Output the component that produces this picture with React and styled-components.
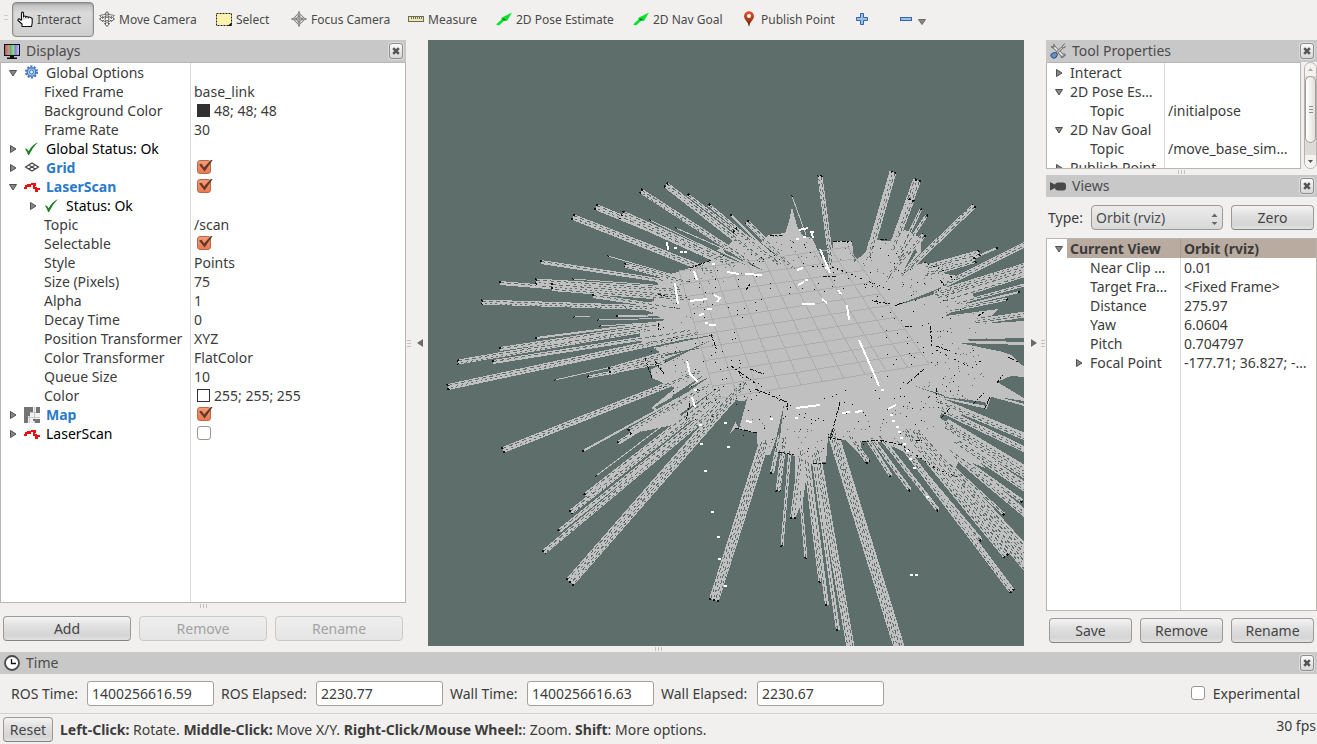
import React from "react";
import styled, { createGlobalStyle, css } from "styled-components";

const GlobalStyle = createGlobalStyle`
  *, *::before, *::after { box-sizing: border-box; }
  body {
    margin: 0;
    background: #f1f0ee;
    color: #3c3c3c;
    font-family: "Noto Sans", "Open Sans", sans-serif;
    font-size: 14px;
    line-height: 19px;
  }
  button, input, select { font: inherit; color: inherit; }
`;

const Window = styled.div`
  min-height: 100vh;
  display: flex;
  flex-direction: column;
`;

/* ---------- toolbar ---------- */

const Toolbar = styled.header`
  display: flex;
  align-items: center;
  height: 40px;
  padding: 0 0 2px 4px;
`;

const ToolbarGrip = styled.span`
  width: 4px;
  height: 8px;
  margin-right: 4px;
  background: repeating-linear-gradient(#cfcdca 0 1px, transparent 1px 4px);
`;

const ToolButton = styled.button`
  display: flex;
  align-items: center;
  gap: 4px;
  width: ${(p) => p.$width}px;
  height: 35px;
  padding: 0 4px;
  border: 1px solid transparent;
  border-radius: 4px;
  background: none;
  font-size: 12px;
  color: #4a4a4a;
  white-space: nowrap;
  svg { flex: none; }
  ${(p) =>
    p.$active &&
    css`
      border-color: #8b8b8b;
      background: linear-gradient(#bdbdbd, #dadada 30%, #cfcfcf);
      box-shadow: inset 0 1px 2px #999;
    `}
`;

/* ---------- docks ---------- */

const Main = styled.main`
  flex: 1;
  display: flex;
`;

const Dock = styled.section`
  flex: none;
  display: flex;
  flex-direction: column;
  width: ${(p) => p.$width}px;
`;

const DockTitle = styled.h2`
  flex: none;
  display: flex;
  align-items: center;
  gap: 6px;
  height: 22px;
  margin: 0;
  padding: 0 3px 0 4px;
  background: #c8c8c8;
  color: #4c4c4c;
  font-size: 14px;
  font-weight: 400;
  svg { flex: none; }
`;

const TitleText = styled.span`
  padding-bottom: 2px;
`;

const CloseButton = styled.button`
  display: flex;
  align-items: center;
  justify-content: center;
  width: 14px;
  height: 16px;
  margin-left: auto;
  padding: 0;
  border: 1px solid #8e8e8e;
  border-radius: 3px;
  background: linear-gradient(#fafafa, #d8d8d8);
  box-shadow: 0 0 0 1px #dcdcdc;
`;

const TreeFrame = styled.div`
  flex: ${(p) => (p.$height ? "none" : "1")};
  height: ${(p) => (p.$height ? `${p.$height}px` : "auto")};
  min-width: 0;
  overflow: hidden;
  border: 1px solid #bab5b0;
  background: linear-gradient(#d9d9d9, #d9d9d9) ${(p) => p.$split}px 0 / 1px 100% no-repeat #fff;
`;

const Tree = styled.table`
  width: 100%;
  table-layout: fixed;
  border-collapse: separate;
  border-spacing: 0;
`;

const NameCell = styled.td`
  width: ${(p) => p.$width}px;
  height: 19px;
  padding: 0;
`;

const ValueCell = styled.td`
  height: 19px;
  padding: 0 0 0 3px;
  border-left: 1px solid #d9d9d9;
  white-space: nowrap;
  ${(p) =>
    p.$selected &&
    css`
      background: #b9aba0;
      border-color: #a99c92;
      font-weight: 700;
    `}
`;

const NameLine = styled.div`
  display: flex;
  align-items: center;
  height: 19px;
  padding-left: ${(p) => p.$indent}px;
  white-space: nowrap;
`;

const Twisty = styled.span`
  flex: none;
  display: flex;
  width: 12px;
`;

const RowIcon = styled.span`
  flex: none;
  display: flex;
  width: 16px;
  margin-left: 3px;
`;

const Name = styled.span`
  flex: 1;
  padding-left: ${(p) => p.$gap}px;
  color: ${(p) => (p.$tone === "link" ? "#2a7ac8" : p.$tone === "black" ? "#000" : "#3c3c3c")};
  font-weight: ${(p) => (p.$tone === "link" || p.$selected ? 700 : 400)};
  background: ${(p) => (p.$selected ? "#b9aba0" : "none")};
`;

const ValueLine = styled.div`
  display: flex;
  align-items: center;
  gap: 4px;
  height: 19px;
`;

const Swatch = styled.span`
  width: 13px;
  height: 13px;
  margin-left: 3px;
  border: 1px solid #303030;
  background: ${(p) => p.$color};
`;

const Checkbox = styled.input`
  appearance: none;
  flex: none;
  position: relative;
  width: 14px;
  height: 14px;
  margin: 0;
  border: 1px solid #9a9590;
  border-radius: 3px;
  background: #fff;
  &:checked {
    border-color: #b4684c;
    background: linear-gradient(#f59a76, #ec7a52);
  }
  &:checked::after {
    content: "";
    position: absolute;
    left: 1px;
    top: -1px;
    width: 14px;
    height: 12px;
    background: #623a2c;
    clip-path: polygon(0 42%, 18% 36%, 36% 66%, 88% 0, 100% 0, 40% 100%);
  }
`;

const TreeCheckbox = styled(Checkbox)`
  margin: 0 0 2px 3px;
`;

const ScrollArea = styled.div`
  display: flex;
  gap: 3px;
`;

const ScrollTree = styled(TreeFrame)`
  flex: 1;
`;

const ScrollBar = styled.div`
  display: flex;
  flex-direction: column;
  width: 13px;
  height: 107px;
  border: 1px solid #b5b2af;
  border-radius: 7px;
  background: #dddbd8;
  overflow: hidden;
`;

const ScrollArrow = styled.button`
  display: flex;
  align-items: center;
  justify-content: center;
  height: 13px;
  padding: 0;
  border: 0;
  background: #f4f3f2;
`;

const ScrollThumb = styled.div`
  display: flex;
  align-items: center;
  justify-content: center;
  height: 67px;
  margin-bottom: 12px;
  border: 1px solid #a09c98;
  border-radius: 6px;
  background: linear-gradient(90deg, #fff, #e2e1df);
  &::after {
    content: "";
    width: 4px;
    height: 7px;
    background: repeating-linear-gradient(#8f8f8f 0 1px, transparent 1px 3px);
  }
`;

const ButtonRow = styled.div`
  display: flex;
  gap: 8px;
  padding: ${(p) => p.$pad};
`;

const PushButton = styled.button`
  flex: ${(p) => (p.$width ? "none" : "1")};
  width: ${(p) => (p.$width ? `${p.$width}px` : "auto")};
  min-width: 0;
  height: 25px;
  padding: 0 4px;
  border: 1px solid #9c9a98;
  border-bottom-color: #858381;
  border-radius: 4px;
  background: linear-gradient(#f4f4f4, #e0e0e0 40%, #d5d5d5 80%, #e2e2e2);
  color: #454545;
  line-height: 19px;
  &:disabled {
    border-color: #cbc9c7;
    background: linear-gradient(#eeeeee, #e5e5e5);
    color: #a2a2a2;
  }
`;

const TypeRow = styled.div`
  display: flex;
  align-items: center;
  gap: 8px;
  height: 41px;
  padding: 0 3px 0 2px;
  label { width: 35px; white-space: nowrap; }
`;

const SelectBox = styled.div`
  flex: 1;
  position: relative;
  svg { position: absolute; right: 5px; top: 8px; pointer-events: none; }
`;

const Select = styled.select`
  appearance: none;
  display: block;
  width: 100%;
  height: 25px;
  padding: 0 20px 0 4px;
  border: 1px solid #9c9a98;
  border-radius: 4px;
  background: linear-gradient(#ececec, #d8d8d8);
  color: #4c4c4c;
`;

const HandleRow = styled.div`
  flex: none;
  display: flex;
  align-items: center;
  justify-content: center;
  height: ${(p) => p.$height}px;
  &::after {
    content: "";
    width: 7px;
    height: 4px;
    background: repeating-linear-gradient(90deg, #c4c2bf 0 1px, transparent 1px 3px);
  }
`;

const SideHandle = styled.div`
  flex: none;
  display: flex;
  align-items: center;
  justify-content: space-between;
  width: 22px;
  padding: ${(p) => (p.$flip ? "0 1px 0 7px" : "0 5px 0 1px")};
`;

const SideDots = styled.span`
  width: 4px;
  height: 7px;
  background: repeating-linear-gradient(#c4c2bf 0 1px, transparent 1px 3px);
`;

const Viewport = styled.div`
  flex: 1;
  min-width: 0;
  display: flex;
  background: ${"#5e6e6b"};
  overflow: hidden;
  svg { flex: 1; width: 100%; min-height: 606px; }
`;

/* ---------- bottom ---------- */

const TimeRow = styled.div`
  display: flex;
  align-items: center;
  gap: 8px;
  height: 40px;
  padding: 0 17px 1px 11px;
  border-bottom: 1px solid #d4d2cf;
`;

const TimeLabel = styled.label`
  width: ${(p) => p.$width}px;
  white-space: nowrap;
`;

const TimeField = styled.input`
  width: 127px;
  height: 25px;
  margin-right: -1px;
  padding: 0 4px;
  border: 1px solid #a5a09b;
  border-radius: 3px;
  background: #fff;
`;

const Experimental = styled.label`
  display: flex;
  align-items: center;
  gap: 8px;
  margin-left: auto;
`;

const StatusBar = styled.footer`
  display: flex;
  align-items: center;
  gap: 7px;
  height: 30px;
  padding: 0 1px 0 3px;
  white-space: nowrap;
`;

const Fps = styled.span`
  align-self: flex-start;
  margin-left: auto;
  padding-top: 2px;
`;

/* ---------- icons ---------- */

const Svg = ({ w = 16, h = 16, children, ...rest }) => (
  <svg width={w} height={h} viewBox={`0 0 ${w} ${h}`} fill="none" aria-hidden="true" {...rest}>
    {children}
  </svg>
);

const HandIcon = () => (
  <Svg>
    <path
      d="M4.5 9V1.8Q5.500 0.500 6.500 1.800V6.500M6.500 6.500V5.500Q7.500 4.500 8.800 5.500V7M8.800 7V5.800Q10 5 11.200 6V7.500M11.200 7.500V6.400Q12.500 5.600 13.500 6.500L15.200 7.500V12L14.500 15.500H5V13L1 9.500Q0.800 7.500 2.500 8L4.500 9.500"
      fill="#fff"
      stroke="#111"
      strokeWidth="1.1"
      strokeLinejoin="round"
    />
  </Svg>
);

const MoveIcon = () => (
  <Svg>
    <path
      d="M8 0.500L10.500 3.500H9V5.500Q11 6 12 7V5.500L15.500 8L12 10.500V9Q11 10.500 9 10.800V12.500H10.500L8 15.500L5.500 12.500H7V10.800Q5 10.500 4 9V10.500L0.500 8L4 5.500V7Q5 6 7 5.500V3.500H5.500Z"
      fill="#fff"
      stroke="#555"
      strokeLinejoin="round"
    />
    <path d="M0.500 4.500Q8 1.500 15.500 4.500M0.500 4.500L4 8M15.500 4.500L12 8" stroke="#777" />
    <circle cx="8" cy="8" r="2" stroke="#555" />
  </Svg>
);

const SelectIcon = () => (
  <Svg>
    <rect x="0.500" y="2.500" width="15" height="12" fill="#fbf3ac" stroke="#222" strokeDasharray="2 1" />
    <path d="M15.500 11.500V15H11.500Z" fill="#111" />
  </Svg>
);

const FocusIcon = () => (
  <Svg>
    <circle cx="8" cy="8" r="4.500" stroke="#777" />
    <circle cx="8" cy="8" r="2.500" stroke="#777" />
    <path d="M8 4V12M4 8H12" stroke="#777" />
    <path d="M8 0.500L9.300 4H6.700ZM8 15.500L9.300 12H6.700ZM0.500 8L4 6.700V9.300ZM15.500 8L12 6.700V9.300Z" fill="#fff" stroke="#777" />
  </Svg>
);

const RulerIcon = () => (
  <Svg>
    <rect x="0.500" y="5.500" width="15" height="5" fill="#efe6ad" stroke="#6e6a5d" />
    <path d="M3.500 6V8M5.500 6V8M7.500 6V8M9.500 6V8M11.500 6V8M13.500 6V8" stroke="#6e6a5d" />
  </Svg>
);

const ArrowIcon = () => (
  <Svg>
    <path d="M0 13.500L6 8L5 7L16 1.500L11 10L8.500 9.500L3 14.500Z" fill="#08e22c" />
    <path d="M6.500 8L9.500 9" stroke="#067d1a" strokeWidth="1.500" />
  </Svg>
);

const PinIcon = () => (
  <Svg>
    <defs>
      <linearGradient id="pin" x1="0" y1="0" x2="0" y2="1">
        <stop offset="0" stopColor="#e5532f" />
        <stop offset="0.550" stopColor="#a83a1c" />
        <stop offset="1" stopColor="#40200c" />
      </linearGradient>
    </defs>
    <path d="M8 15.800Q7.500 12 4.500 9Q3 7.500 3 5.300A5 5 0 0 1 13 5.300Q13 7.500 11.500 9Q8.500 12 8 15.800Z" fill="url(#pin)" />
    <circle cx="8" cy="5" r="2" fill="#fff" />
  </Svg>
);

const PlusIcon = () => (
  <Svg>
    <path d="M6.500 2.500H9.500V6.500H13.500V9.500H9.500V13.500H6.500V9.500H2.500V6.500H6.500Z" fill="#9cc0e8" stroke="#3465a4" />
  </Svg>
);

const MinusIcon = () => (
  <Svg>
    <rect x="2.500" y="6.500" width="11" height="3" fill="#9cc0e8" stroke="#3465a4" />
  </Svg>
);

const DropIcon = () => (
  <Svg w={8} h={12}>
    <path d="M0.500 6.500H7.500L4 11.500Z" fill="#8a8a8a" stroke="#6a6a6a" />
  </Svg>
);

const MonitorIcon = () => (
  <Svg>
    <defs>
      <linearGradient id="screen">
        <stop offset="0" stopColor="#a95b5b" />
        <stop offset="0.330" stopColor="#d79b98" />
        <stop offset="0.340" stopColor="#52a85c" />
        <stop offset="0.660" stopColor="#a9e0aa" />
        <stop offset="0.670" stopColor="#7a76cf" />
        <stop offset="1" stopColor="#c9c6f5" />
      </linearGradient>
    </defs>
    <rect x="0.500" y="1.500" width="15" height="11" fill="url(#screen)" stroke="#111" />
    <path d="M6 13H10V14.500H13V16H3V14.500H6Z" fill="#111" />
  </Svg>
);

const ToolsIcon = () => (
  <Svg>
    <path d="M3 3L12.500 12.500" stroke="#777" strokeWidth="3.200" />
    <path d="M3 3L12.500 12.500" stroke="#f4f4f4" strokeWidth="1.600" />
    <path d="M1 3.500L3 4.500L4.500 3L3.500 1M10.500 13.500L12 14.500L15 12L13.500 10.500" stroke="#777" strokeWidth="1.500" />
    <path d="M14 3L6.500 10" stroke="#777" strokeWidth="2.400" />
    <path d="M14 3L7 9.500" stroke="#e6e6e6" />
    <path d="M15 0.500L12.500 2.500V4.500H15L16 3" stroke="#777" />
    <path d="M1 13.500Q0 11 3 10L5.500 9.500L7.500 11.500L6 14.500Q3 16.500 1 13.500Z" fill="#6f8fc8" stroke="#26457f" />
  </Svg>
);

const CameraIcon = () => (
  <Svg>
    <path d="M0 4L6 7V9.500L0 12.500Z" fill="#484848" />
    <rect x="5" y="4.500" width="11" height="8" rx="3" fill="#484848" />
  </Svg>
);

const ClockIcon = () => (
  <Svg>
    <circle cx="8" cy="8" r="7" fill="#fff" stroke="#4a4a4a" strokeWidth="1.800" />
    <path d="M7.500 4V8.500H12" stroke="#111" strokeWidth="1.300" />
  </Svg>
);

const CrossIcon = () => (
  <Svg w={8} h={8}>
    <path d="M1.200 1.200L6.800 6.800M6.800 1.200L1.200 6.800" stroke="#555" strokeWidth="2.600" />
  </Svg>
);

const GearIcon = () => (
  <Svg>
    <circle cx="7.500" cy="7" r="5.500" stroke="#3f74b8" strokeWidth="2" strokeDasharray="2 1.450" />
    <circle cx="7.500" cy="7" r="4.300" fill="#a9c8ea" stroke="#4a80c0" strokeWidth="1.400" />
    <circle cx="7.500" cy="7" r="2" fill="#dceaf7" stroke="#3f74b8" />
  </Svg>
);

const TickIcon = () => (
  <Svg>
    <path d="M1 7.800Q3 6.800 4.500 10.200Q8 4 14 1Q8.500 6.500 5 14H4Q3 10.500 1 7.800Z" fill="#1d7d22" />
  </Svg>
);

const GridIcon = () => (
  <Svg>
    <path d="M1.500 7L8 3L14.500 7L8 11ZM4.700 5L11.300 9M11.300 5L4.700 9" stroke="#444" strokeWidth="1.200" />
  </Svg>
);

const ScanIcon = () => (
  <Svg shapeRendering="crispEdges">
    <path d="M0 9H2V7H4V6H6V7H5M7 5H11V7M10 6V9H12V12M11 12H13V10H16V9" stroke="#f00d0d" strokeWidth="1.600" />
  </Svg>
);

const MapIcon = () => (
  <Svg>
    <rect width="16" height="16" fill="#f1f1f1" />
    <path d="M5.500 0V16M10.500 0V16M0 5.500H16M0 10.500H16" stroke="#c9c9c9" />
    <path d="M0 0H9V5H6V9H4V16H0ZM12 0H16V6H12ZM9 12H16V16H11V14H9Z" fill="#747474" />
  </Svg>
);

const Triangle = ({ open }) => (
  <Svg w={8} h={8}>
    <path d={open ? "M0.500 1.500H7.500L4 7Z" : "M1.500 0.500V7.500L7 4Z"} fill="#888" stroke="#4f4f4f" />
  </Svg>
);

const rowIcons = { gear: GearIcon, tick: TickIcon, grid: GridIcon, scan: ScanIcon, map: MapIcon };

/* ---------- property trees ---------- */

const displayRows = [
  { name: "Global Options", icon: "gear", open: true },
  { name: "Fixed Frame", leaf: true, value: "base_link" },
  { name: "Background Color", leaf: true, value: "48; 48; 48", swatch: "#303030" },
  { name: "Frame Rate", leaf: true, value: "30" },
  { name: "Global Status: Ok", icon: "tick", tone: "black" },
  { name: "Grid", icon: "grid", tone: "link", checked: true },
  { name: "LaserScan", icon: "scan", tone: "link", open: true, checked: true },
  { name: "Status: Ok", icon: "tick", tone: "black", level: 1 },
  { name: "Topic", leaf: true, value: "/scan" },
  { name: "Selectable", leaf: true, checked: true },
  { name: "Style", leaf: true, value: "Points" },
  { name: "Size (Pixels)", leaf: true, value: "75" },
  { name: "Alpha", leaf: true, value: "1" },
  { name: "Decay Time", leaf: true, value: "0" },
  { name: "Position Transformer", leaf: true, value: "XYZ" },
  { name: "Color Transformer", leaf: true, value: "FlatColor" },
  { name: "Queue Size", leaf: true, value: "10" },
  { name: "Color", leaf: true, value: "255; 255; 255", swatch: "#fff" },
  { name: "Map", icon: "map", tone: "link", checked: true },
  { name: "LaserScan", icon: "scan", tone: "black", checked: false },
];

const toolRows = [
  { name: "Interact" },
  { name: "2D Pose Es…", open: true },
  { name: "Topic", leaf: true, value: "/initialpose" },
  { name: "2D Nav Goal", open: true },
  { name: "Topic", leaf: true, value: "/move_base_sim…" },
  { name: "Publish Point" },
];

const viewRows = [
  { name: "Current View", open: true, value: "Orbit (rviz)", selected: true },
  { name: "Near Clip …", leaf: true, value: "0.01" },
  { name: "Target Fra…", leaf: true, value: "<Fixed Frame>" },
  { name: "Distance", leaf: true, value: "275.97" },
  { name: "Yaw", leaf: true, value: "6.0604" },
  { name: "Pitch", leaf: true, value: "0.704797" },
  { name: "Focal Point", level: 1, value: "-177.71; 36.827; -…" },
];

function PropertyTree({ rows, split }) {
  return (
    <Tree>
      <tbody>
        {rows.map((row, i) => {
          const Icon = rowIcons[row.icon];
          return (
            <tr key={i}>
              <NameCell $width={split}>
                <NameLine $indent={row.leaf ? 43 : 8 + 20 * (row.level || 0)}>
                  {!row.leaf && (
                    <Twisty>
                      <Triangle open={row.open} />
                    </Twisty>
                  )}
                  {Icon && (
                    <RowIcon>
                      <Icon />
                    </RowIcon>
                  )}
                  <Name $tone={row.tone} $selected={row.selected} $gap={row.leaf ? 0 : Icon ? 6 : 3}>
                    {row.name}
                  </Name>
                </NameLine>
              </NameCell>
              <ValueCell $selected={row.selected}>
                <ValueLine>
                  {row.swatch && <Swatch $color={row.swatch} />}
                  {row.checked !== undefined && (
                    <TreeCheckbox type="checkbox" defaultChecked={row.checked} aria-label={row.name} />
                  )}
                  {row.value}
                </ValueLine>
              </ValueCell>
            </tr>
          );
        })}
      </tbody>
    </Tree>
  );
}

/* ---------- laser map ---------- */

const SKY = "#5e6e6b";
const FREE = "#c0c0c0";

/* outer tip x, y, inner end x, y, width */
const rays = [
  [666, 185, 765, 262, 6], [641, 191, 750, 262, 5], [596, 207, 720, 258, 6], [622, 215, 735, 266, 9],
  [573, 217, 712, 272, 6], [688, 195, 775, 262, 3], [709, 205, 770, 256, 3], [650, 220, 720, 254, 1],
  [676, 228, 740, 256, 1], [541, 262, 665, 281, 4], [608, 256, 680, 277, 1], [625, 265, 690, 283, 5],
  [500, 283, 680, 298, 4], [536, 282, 680, 291, 7], [552, 287, 690, 298, 8], [482, 302, 660, 308, 5],
  [593, 296, 680, 309, 4], [573, 279, 680, 287, 1], [617, 316, 680, 315, 2], [598, 320, 680, 318, 1],
  [458, 362, 650, 329, 5], [493, 362, 690, 331, 4], [536, 338, 660, 322, 2], [500, 349, 660, 325, 4],
  [574, 317, 590, 316, 1], [600, 326, 680, 321, 1], [448, 387, 700, 333, 6], [555, 380, 660, 356, 1],
  [588, 377, 665, 362, 3], [610, 371, 665, 355, 8], [503, 450, 700, 372, 6], [583, 451, 690, 392, 2],
  [596, 476, 690, 405, 1], [618, 443, 700, 392, 4], [630, 432, 710, 385, 7], [585, 495, 720, 390, 4],
  [571, 512, 720, 395, 5], [559, 531, 720, 402, 4], [544, 552, 720, 405, 5], [570, 582, 745, 382, 10],
  [714, 600, 765, 440, 10], [772, 473, 780, 435, 4], [778, 491, 785, 435, 5], [782, 546, 790, 450, 3],
  [793, 518, 802, 450, 6], [806, 558, 800, 490, 3], [820, 582, 805, 460, 3], [827, 605, 808, 460, 4],
  [838, 630, 813, 455, 4], [851, 650, 816, 450, 8], [900, 650, 832, 430, 11], [868, 462, 850, 436, 5],
  [891, 476, 868, 440, 4], [910, 490, 872, 438, 4], [938, 510, 880, 436, 4], [981, 540, 895, 438, 4],
  [1012, 591, 900, 442, 6], [1007, 555, 905, 430, 9], [1028, 568, 915, 430, 10], [1028, 553, 925, 440, 9],
  [1004, 514, 945, 460, 3], [1028, 516, 955, 455, 7], [1022, 501, 950, 450, 4], [1028, 489, 955, 440, 9],
  [1028, 474, 945, 424, 12], [1028, 451, 942, 410, 6], [1028, 438, 937, 400, 7], [1028, 406, 985, 394, 2],
  [820, 176, 832, 268, 5], [893, 172, 868, 258, 7], [917, 180, 892, 250, 8], [911, 200, 892, 250, 7],
  [921, 209, 900, 252, 3], [927, 215, 898, 258, 3], [924, 235, 890, 274, 5], [974, 206, 902, 275, 5],
  [792, 196, 806, 235, 1], [747, 222, 795, 270, 5], [731, 215, 785, 268, 2], [735, 230, 780, 265, 6],
  [997, 248, 930, 277, 2], [1028, 243, 940, 287, 5], [979, 253, 925, 268, 6], [975, 260, 925, 275, 6],
  [1028, 267, 935, 296, 10], [1028, 274, 940, 302, 4], [1028, 284, 955, 304, 3], [1019, 292, 945, 310, 2],
  [1007, 299, 950, 311, 3], [1028, 314, 975, 322, 6],
];

const hull =
  "690,268 712,260 708,254 728,245 740,233 752,238 760,243 768,235 785,233 789,222 792,207 797,226 803,236 812,238 820,255 831,268 833,241 852,241 854,262 866,252 869,240 892,241 905,230 921,238 921,252 904,271 924,262 941,270 946,274 958,276 951,283 935,290 895,306 945,291 970,290 975,298 945,316 1000,307 992,316 977,318 978,324 1024,321 1024,338 950,340 1024,342 1024,345 960,343 1003,352 1011,355 1019,363 1024,366 1024,377 1011,376 997,382 1024,398 1024,401 991,396 987,409 940,398 965,412 960,416 942,407 940,418 970,436 963,445 985,468 960,458 955,470 914,440 935,465 900,450 885,443 868,440 861,443 862,455 855,450 845,440 828,437 826,462 812,463 806,480 803,500 796,516 795,456 780,452 777,437 770,455 758,455 757,433 735,428 730,433 745,402 735,400 718,417 688,421 668,426 640,432 665,414 651,408 675,388 652,378 648,357 660,352 640,340 640,326 665,320 650,312 640,308 655,300 640,294 662,290 655,279";

/* unseen slits that cut into the free area */
const slits = [
  [640, 372, 712, 340, 2], [655, 410, 712, 375, 3], [672, 398, 705, 374, 2], [680, 415, 722, 385, 1],
  [722, 250, 766, 272, 3], [700, 245, 748, 266, 3], [755, 240, 790, 265, 2], [815, 240, 824, 266, 2],
  [829, 232, 834, 278, 1], [855, 250, 857, 258, 5], [903, 254, 885, 284, 2], [915, 250, 902, 274, 2],
  [640, 348, 720, 334, 2], [660, 356, 715, 345, 1], [640, 318, 670, 314, 2], [1004, 306, 945, 316, 2],
  [735, 425, 748, 396, 4], [776, 442, 784, 404, 3], [730, 412, 746, 400, 3], [985, 404, 936, 396, 2],
  [790, 470, 792, 455, 2], [950, 462, 914, 438, 2], [868, 452, 852, 430, 1], [960, 430, 940, 414, 2],
  [944, 396, 915, 386, 1],
];

const walls = [
  "M652,378L645,358M655,361L664,374M711,334L717,351M731,366L755,383M755,389L787,402V410M746,290L750,284",
  "M690,268L712,260M770,235L782,236M833,241H852M880,239H888M828,437L842,440M862,442L880,440M880,440L902,445",
  "M826,463H812M735,428L757,433M930,326L932,346M907,384L924,369M936,388V398M936,346L950,351",
  "M840,402L830,440M778,452L795,455M941,418L950,408M916,441L922,440M874,301L890,304M895,306L904,302",
  "M823,277L836,276M750,369L764,374M990,397L984,410M973,404L984,393M997,383L1003,375M1008,357L1018,362",
  "M658,294L668,297M658,323V331M690,403L686,421M940,280L946,287M978,316L984,312M905,326H914",
];

const faintWalls = [
  "M812,266L835,268L865,280L890,290M936,350L972,368L982,360",
  "M900,444L938,470L960,478M924,262L946,272L958,283",
];

const hits = [
  "M667,242L668,250M675,283L678,304M694,271L697,280M690,301L707,299M714,295L720,298L717,302M699,315L704,314M709,325H716",
  "M687,361L690,374L698,382M692,397L695,407M727,272L739,274M745,274L762,275M802,304H815M799,230L808,228M820,249L830,273",
  "M838,290L841,294M847,305L849,320M859,340L874,374L879,386M796,408L820,405M842,413L850,412M855,412L862,411M888,409L896,405",
  "M797,270L803,268M798,285L804,282M811,231L813,238M822,299L827,303M707,309L712,309M746,421L752,422",
];

const hitDots = [
  [675, 248], [681, 252], [685, 252], [713, 264], [797, 239], [804, 237], [812, 232], [806, 280], [826, 268],
  [882, 390], [891, 415], [893, 421], [897, 427], [899, 432], [901, 438], [904, 444], [907, 451], [910, 459],
  [914, 468], [927, 497], [728, 447], [701, 444], [700, 425], [725, 423], [771, 419], [796, 418], [705, 471],
  [712, 512], [718, 537], [719, 559], [725, 586], [911, 575], [916, 575], [695, 390], [706, 323],
];

/* small seeded generator, so that the speckle is the same on each render */
const seeded = (seed) => () => {
  seed = (seed * 1664525 + 1013904223) % 4294967296;
  return seed / 4294967296;
};

const ringDots = (seed, count, near, far) => {
  const next = seeded(seed);
  let d = "";
  for (let i = 0; i < count; i++) {
    const a = next() * Math.PI * 2;
    const r = near + next() * (far - near);
    d += `M${Math.round(812 + Math.cos(a) * r * 1.5)},${Math.round(345 + Math.sin(a) * r)}h1`;
  }
  return d;
};

const wallDots = ringDots(7, 260, 50, 108);
const edgeDots = ringDots(23, 420, 84, 118);

const gridLines = [];
for (let i = 0; i <= 10; i++) {
  const t = i / 10;
  gridLines.push(`M${679 + 37 * t},${271 + 128 * t}L${848 + 81 * t},${247 + 117 * t}`);
  gridLines.push(`M${679 + 169 * t},${271 - 24 * t}L${716 + 213 * t},${399 - 35 * t}`);
}

function Ray({ ray }) {
  const [x1, y1, x2, y2, w] = ray;
  const len = Math.hypot(x2 - x1, y2 - y1);
  const nx = -(y2 - y1) / len;
  const ny = (x2 - x1) / len;
  const gaps = [];
  for (let o = -w / 2 + 1.5; o <= w / 2 - 1; o += 2.5) gaps.push(o);
  return (
    <>
      <path d={`M${x1},${y1}L${x2},${y2}`} stroke={FREE} strokeWidth={w} />
      {gaps.map((o, i) => (
        <path
          key={i}
          d={`M${x1 + nx * o},${y1 + ny * o}L${x2 + nx * o * 0.7},${y2 + ny * o * 0.7}`}
          stroke={SKY}
          strokeDasharray={i % 2 ? "2 3" : "4 3"}
          strokeDashoffset={i * 2}
        />
      ))}
      <path
        d={`M${x1 - (nx * w) / 2},${y1 - (ny * w) / 2}L${x1 + (nx * w) / 2},${y1 + (ny * w) / 2}`}
        stroke="#111"
        strokeWidth="2"
        strokeDasharray="2 2"
      />
    </>
  );
}

const LaserMap = () => (
  <svg
    viewBox="428 40 596 606"
    preserveAspectRatio="xMidYMid slice"
    fill="none"
    shapeRendering="crispEdges"
    role="img"
    aria-label="Map and laser scan"
  >
    <polygon points={hull} fill={FREE} />
    {slits.map(([x1, y1, x2, y2, w], i) => (
      <polygon key={i} points={`${x1},${y1 - w} ${x1 + w},${y1 + w} ${x2},${y2}`} fill={SKY} />
    ))}
    {rays.map((ray, i) => (
      <Ray key={i} ray={ray} />
    ))}
    <path d={edgeDots} stroke={SKY} />
    <path d={gridLines.join("")} stroke="#adadad" />
    <path d={wallDots} stroke="#111" />
    {walls.map((d, i) => (
      <path key={i} d={d} stroke="#111" strokeDasharray="4 1 2 2" />
    ))}
    {faintWalls.map((d, i) => (
      <path key={i} d={d} stroke="#111" strokeDasharray="2 3 1 4" />
    ))}
    {hits.map((d, i) => (
      <path key={i} d={d} stroke="#fff" strokeWidth="2" />
    ))}
    {hitDots.map(([x, y], i) => (
      <rect key={i} x={x - 1} y={y - 1} width="3" height="2" fill="#fff" />
    ))}
  </svg>
);

/* ---------- page ---------- */

const tools = [
  { label: "Interact", icon: HandIcon, width: 82, active: true },
  { label: "Move Camera", icon: MoveIcon, width: 117 },
  { label: "Select", icon: SelectIcon, width: 75 },
  { label: "Focus Camera", icon: FocusIcon, width: 117 },
  { label: "Measure", icon: RulerIcon, width: 88 },
  { label: "2D Pose Estimate", icon: ArrowIcon, width: 137 },
  { label: "2D Nav Goal", icon: ArrowIcon, width: 108 },
  { label: "Publish Point", icon: PinIcon, width: 113 },
];

const times = [
  { id: "ros-time", label: "ROS Time:", value: "1400256616.59", width: 68 },
  { id: "ros-elapsed", label: "ROS Elapsed:", value: "2230.77", width: 87 },
  { id: "wall-time", label: "Wall Time:", value: "1400256616.63", width: 69 },
  { id: "wall-elapsed", label: "Wall Elapsed:", value: "2230.67", width: 88 },
];

const Title = ({ icon: Icon, children }) => (
  <DockTitle>
    <Icon />
    <TitleText>{children}</TitleText>
    <CloseButton aria-label={`Close ${children}`}>
      <CrossIcon />
    </CloseButton>
  </DockTitle>
);

export default function App() {
  return (
    <Window>
      <GlobalStyle />
      <Toolbar>
        <ToolbarGrip />
        {tools.map(({ label, icon: Icon, width, active }) => (
          <ToolButton key={label} $width={width} $active={active}>
            <Icon />
            {label}
          </ToolButton>
        ))}
        <ToolButton $width={44} aria-label="Add tool">
          <PlusIcon />
        </ToolButton>
        <ToolButton $width={44} aria-label="Remove tool">
          <MinusIcon />
          <DropIcon />
        </ToolButton>
      </Toolbar>

      <Main>
        <Dock $width={406}>
          <Title icon={MonitorIcon}>Displays</Title>
          <TreeFrame $split={189}>
            <PropertyTree rows={displayRows} split={189} />
          </TreeFrame>
          <HandleRow $height={6} />
          <ButtonRow $pad="7px 3px 5px">
            <PushButton>Add</PushButton>
            <PushButton disabled>Remove</PushButton>
            <PushButton disabled>Rename</PushButton>
          </ButtonRow>
        </Dock>

        <SideHandle>
          <SideDots />
          <Svg w={6} h={8}>
            <path d="M6 0V8L0 4Z" fill="#6a6a6a" />
          </Svg>
        </SideHandle>
        <Viewport>
          <LaserMap />
        </Viewport>
        <SideHandle $flip>
          <Svg w={6} h={8}>
            <path d="M0 0V8L6 4Z" fill="#6a6a6a" />
          </Svg>
          <SideDots />
        </SideHandle>

        <Dock $width={271}>
          <Title icon={ToolsIcon}>Tool Properties</Title>
          <ScrollArea>
            <ScrollTree $height={107} $split={117}>
              <PropertyTree rows={toolRows} split={117} />
            </ScrollTree>
            <ScrollBar>
              <ScrollArrow aria-label="Scroll up">
                <Svg w={5} h={3}>
                  <path d="M0 3H5L2.500 0Z" fill="#aaa" />
                </Svg>
              </ScrollArrow>
              <ScrollThumb />
              <ScrollArrow aria-label="Scroll down">
                <Svg w={5} h={3}>
                  <path d="M0 0H5L2.500 3Z" fill="#555" />
                </Svg>
              </ScrollArrow>
            </ScrollBar>
          </ScrollArea>
          <HandleRow $height={6} />
          <Title icon={CameraIcon}>Views</Title>
          <TypeRow>
            <label htmlFor="view-type">Type:</label>
            <SelectBox>
              <Select id="view-type" defaultValue="orbit">
                <option value="orbit">Orbit (rviz)</option>
              </Select>
              <Svg w={7} h={12}>
                <path d="M0.500 4H6.500L3.500 0.500ZM0.500 9H6.500L3.500 12Z" fill="#666" />
              </Svg>
            </SelectBox>
            <PushButton $width={83}>Zero</PushButton>
          </TypeRow>
          <TreeFrame $split={133}>
            <PropertyTree rows={viewRows} split={133} />
          </TreeFrame>
          <ButtonRow $pad="7px 3px 3px">
            <PushButton>Save</PushButton>
            <PushButton>Remove</PushButton>
            <PushButton>Rename</PushButton>
          </ButtonRow>
        </Dock>
      </Main>

      <HandleRow $height={6} />
      <Title icon={ClockIcon}>Time</Title>
      <TimeRow>
        {times.map((t) => (
          <React.Fragment key={t.id}>
            <TimeLabel htmlFor={t.id} $width={t.width}>
              {t.label}
            </TimeLabel>
            <TimeField id={t.id} defaultValue={t.value} />
          </React.Fragment>
        ))}
        <Experimental>
          <Checkbox type="checkbox" />
          Experimental
        </Experimental>
      </TimeRow>
      <StatusBar>
        <PushButton $width={50}>Reset</PushButton>
        <span>
          <b>Left-Click:</b> Rotate. <b>Middle-Click:</b> Move X/Y. <b>Right-Click/Mouse Wheel:</b>: Zoom.{" "}
          <b>Shift</b>: More options.
        </span>
        <Fps>30 fps</Fps>
      </StatusBar>
    </Window>
  );
}
